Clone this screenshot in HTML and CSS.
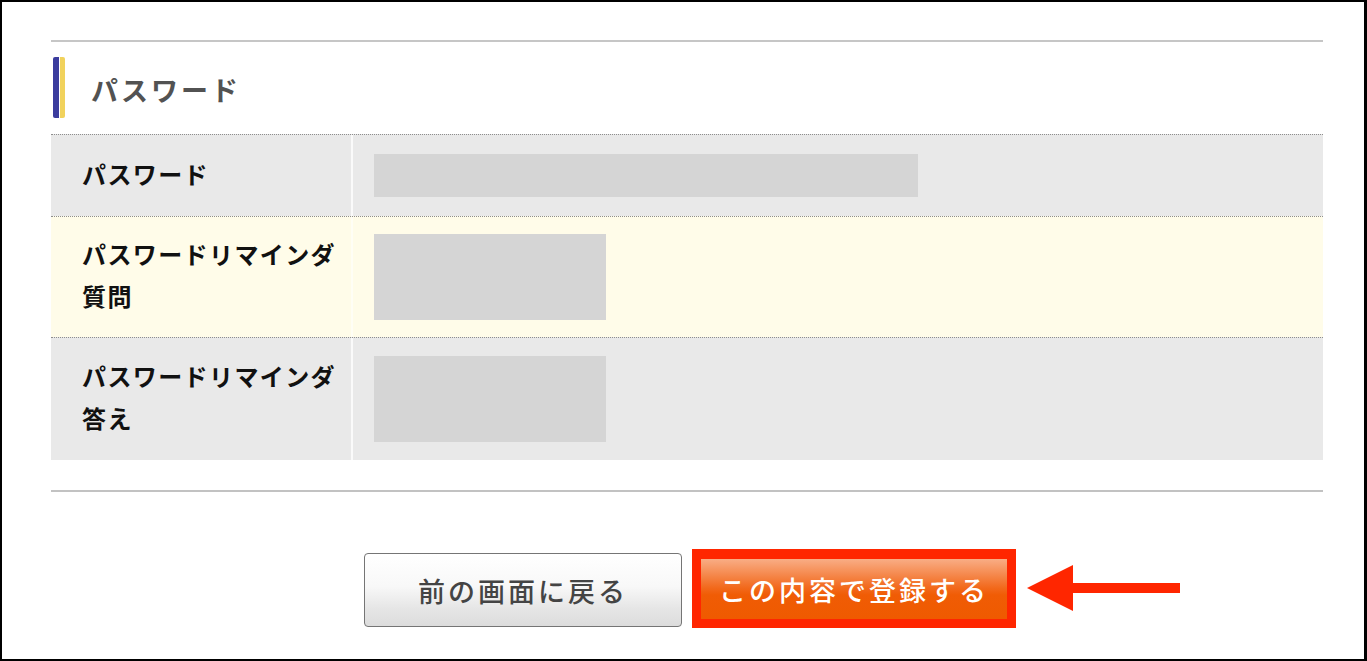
FILE: index.html
```html
<!DOCTYPE html>
<html lang="ja">
<head>
  <meta charset="UTF-8">
  <meta name="viewport" content="width=device-width, initial-scale=1.0">
  <title>パスワード確認</title>
  <link rel="stylesheet" href="styles.css">
</head>
<body>
  <div class="frame">
    <div class="content">
      <hr class="rule rule-top">

      <h2 class="section-title"><span class="title-mark"></span>パスワード</h2>

      <div class="form-table">
        <div class="form-row">
          <div class="form-label">パスワード</div>
          <div class="form-value"><div class="field field-wide"></div></div>
        </div>
        <div class="form-row form-row-alt">
          <div class="form-label">パスワードリマインダ<br>質問</div>
          <div class="form-value"><div class="field field-tall"></div></div>
        </div>
        <div class="form-row form-row-last">
          <div class="form-label">パスワードリマインダ<br>答え</div>
          <div class="form-value"><div class="field field-tall"></div></div>
        </div>
      </div>

      <hr class="rule rule-bottom">

      <div class="actions">
        <button class="btn btn-back" type="button">前の画面に戻る</button>
        <div class="highlight">
          <button class="btn btn-submit" type="button">この内容で登録する</button>
          <!-- annotation arrow -->
          <svg class="pointer" width="153" height="46" viewBox="0 0 153 46">
            <polygon points="0,23 46,0 46,18 153,18 153,28 46,28 46,46" fill="#ff2600"/>
          </svg>
        </div>
      </div>
    </div>
  </div>
</body>
</html>
```

FILE: styles.css
```css
html, body {
  margin: 0;
  padding: 0;
  background: #fff;
}
body {
  font-family: "Noto Sans CJK JP", "Noto Sans", sans-serif;
  color: #111;
}
.frame {
  box-sizing: border-box;
  width: 1367px;
  height: 661px;
  border-top: 2px solid #000;
  border-left: 2px solid #000;
  border-right: 3px solid #000;
  border-bottom: 2px solid #000;
  overflow: hidden;
}
.content {
  width: 1272px;
  margin-left: 49px;
  display: flex;
  flex-direction: column;
}
.rule {
  margin: 0;
  border: 0;
  height: 2px;
  background: #c6c6c6;
}
.rule-top {
  margin-top: 38px;
}
.rule-bottom {
  margin-top: 30px;
  height: 2px;
  background: #c2c2c2;
}

/* section heading */
.section-title {
  display: flex;
  align-items: center;
  height: 61px;
  margin: 15px 0 0 2px;
  padding-top: 4px;
  box-sizing: border-box;
  font-size: 27px;
  font-weight: 700;
  letter-spacing: 3px;
  color: #525252;
}
.title-mark {
  align-self: stretch;
  width: 12px;
  margin: -4px 26px 0 0;
  border-radius: 2px;
  background: linear-gradient(to right, #3b3c9e 0 6px, #fff 6px 7px, #f1d25c 7px 12px);
}

/* table */
.form-table {
  margin-top: 16px;
}
.form-row {
  display: flex;
  background: #e9e9e9;
  border-top: 1px dotted #8e8e8e;
}
.form-row:nth-child(1) { height: 81px; }
.form-row-alt {
  height: 120px;
  background: #fffce9;
}
.form-row-last { height: 122px; }
.form-label {
  box-sizing: border-box;
  width: 302px;
  padding: 0 0 4px 31px;
  border-right: 2px solid #fafafa;
  display: flex;
  align-items: center;
  font-size: 24px;
  font-weight: 700;
  letter-spacing: 1.4px;
  line-height: 42px;
  color: #111;
}
.form-row-alt .form-label {
  border-right-color: #fffef5;
}
.form-value {
  flex: 1;
  padding-left: 21px;
  display: flex;
  align-items: center;
}
.field {
  background: #d5d5d5;
}
.field-wide {
  width: 544px;
  height: 43px;
}
.field-tall {
  width: 232px;
  height: 86px;
}

/* buttons */
.actions {
  display: flex;
  justify-content: center;
  align-items: flex-start;
  gap: 10px;
  margin-top: 57px;
  padding-left: 6px;
}
.btn {
  font-family: "Noto Sans CJK JP", "Noto Sans", sans-serif;
  font-size: 27px;
  font-weight: 500;
  letter-spacing: 3px;
  cursor: pointer;
}
.btn-back {
  box-sizing: border-box;
  width: 318px;
  height: 74px;
  margin-top: 4px;
  border: 1px solid #757575;
  border-radius: 4px;
  color: #444;
  background: linear-gradient(to bottom, #ffffff 0%, #f8f8f8 45%, #e6e6e6 75%, #dcdcdc 100%);
}
.highlight {
  position: relative;
  border: 9px solid #ff2600;
  border-top-width: 10px;
}
.btn-submit {
  display: block;
  width: 306px;
  height: 60px;
  border: 0;
  padding: 0;
  color: #fff;
  background: linear-gradient(to bottom, #f9ad85 0%, #f58a4f 25%, #f2691c 48%, #f05c05 60%, #ef5a00 100%);
}
.pointer {
  position: absolute;
  left: calc(100% + 20px);
  top: 6px;
}
```
